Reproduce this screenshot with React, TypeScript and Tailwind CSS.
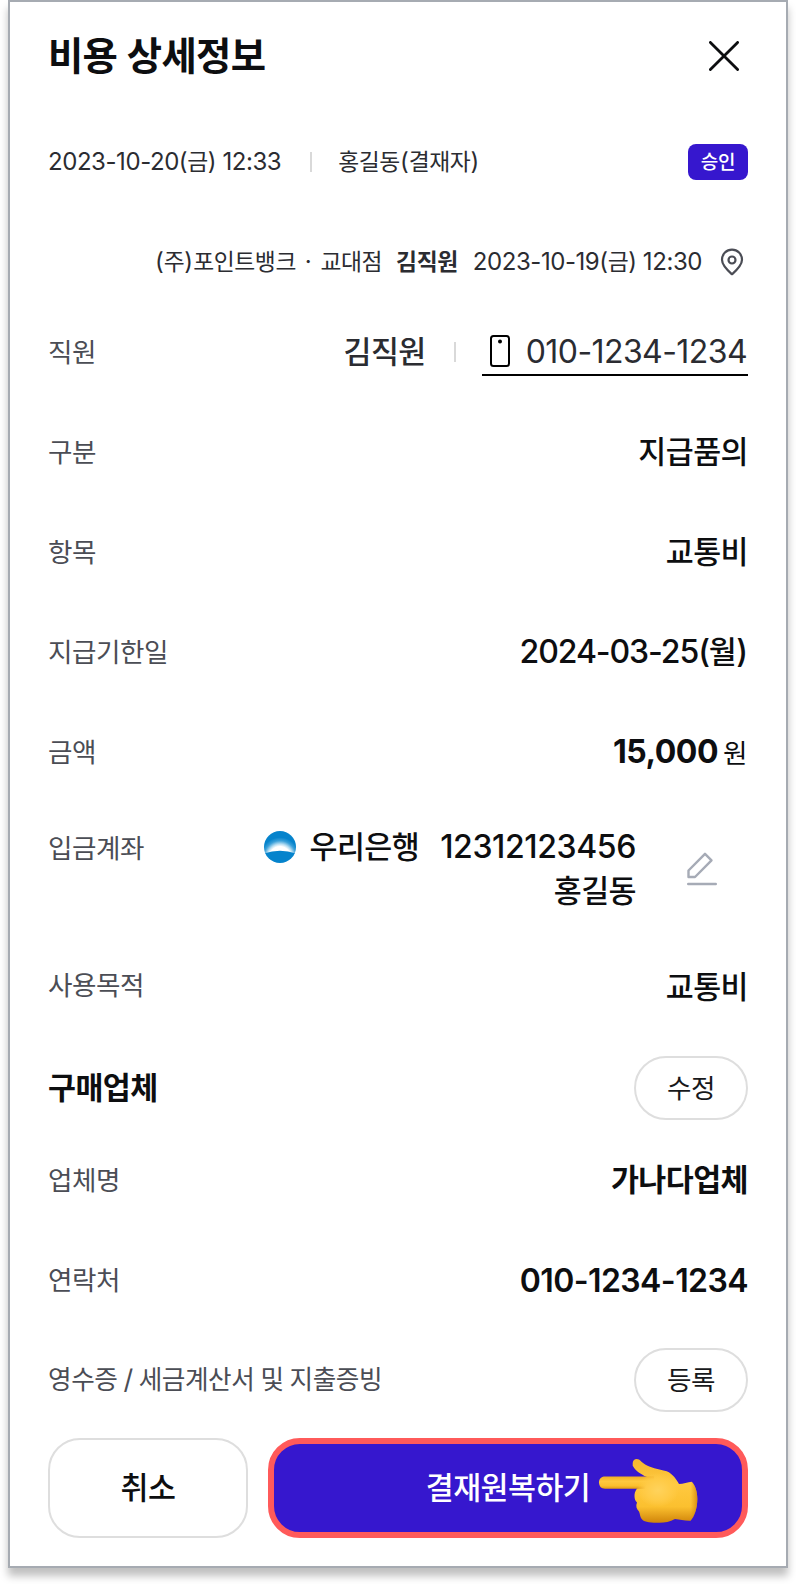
import React from 'react';

const HANGUL = /([\uac00-\ud7a3]+)/;

// Hangul is drawn slightly smaller than the latin digits around it
function Txt({ children, className = '' }: { children: string; className?: string }) {
  return (
    <span className={`whitespace-pre ${className}`}>
      {children.split(HANGUL).map((part, i) =>
        HANGUL.test(part) ? (
          <span key={i} className="text-[0.95em] tracking-[-0.018em]">
            {part}
          </span>
        ) : (
          part
        )
      )}
    </span>
  );
}

function Row({ label, className = 'h-[100px]', children }: { label: string; className?: string; children: React.ReactNode }) {
  return (
    <div className={`flex items-center justify-between ${className}`}>
      <Txt className="text-[28px] text-[#4b4d55]">{label}</Txt>
      {children}
    </div>
  );
}

function Value({ children, className = '' }: { children: string; className?: string }) {
  return <Txt className={`text-[32px] font-medium text-[#0d0e10] ${className}`}>{children}</Txt>;
}

function PillButton({ children }: { children: string }) {
  return (
    <button className="flex h-16 w-[114px] items-center justify-center rounded-full border-2 border-[#dedede] text-[28px] text-[#17181b]">
      <Txt>{children}</Txt>
    </button>
  );
}

function Divider({ className = '' }: { className?: string }) {
  return <span className={`h-5 w-0.5 bg-[#d9d9d9] ${className}`} />;
}

function BankLogo() {
  return (
    <svg className="h-8 w-8" viewBox="0 0 32 32">
      <defs>
        <radialGradient id="sky" gradientUnits="userSpaceOnUse" cx="16" cy="27" r="24" gradientTransform="translate(16 0) scale(.95 1) translate(-16 0)">
          <stop offset="0.48" stopColor="#ffffff" />
          <stop offset="0.58" stopColor="#b8def2" />
          <stop offset="0.72" stopColor="#3aa0d9" />
          <stop offset="0.86" stopColor="#0583cc" />
        </radialGradient>
        <clipPath id="disc">
          <circle cx="16" cy="16" r="16" />
        </clipPath>
      </defs>
      <g clipPath="url(#disc)">
        <rect width="32" height="32" fill="url(#sky)" />
        <path d="M0 22.500Q16 17 32 22.500V32H0z" fill="#0583cc" />
      </g>
    </svg>
  );
}

function PointingHand() {
  return (
    <svg className="h-[67px] w-[100px]" viewBox="0 0 100 67">
      <defs>
        <linearGradient id="skin" x1="0" y1="0" x2="0" y2="1">
          <stop offset="0" stopColor="#f5b82e" />
          <stop offset="0.4" stopColor="#ffc940" />
          <stop offset="0.75" stopColor="#fbc02f" />
          <stop offset="1" stopColor="#d0840a" />
        </linearGradient>
        <linearGradient id="finger" x1="0" y1="0" x2="0" y2="1">
          <stop offset="0" stopColor="#f0ae24" />
          <stop offset="0.4" stopColor="#ffc93f" />
          <stop offset="0.75" stopColor="#fbc02f" />
          <stop offset="1" stopColor="#e29a14" />
        </linearGradient>
        <linearGradient id="cuff" x1="0" y1="0" x2="1" y2="0">
          <stop offset="0.7" stopColor="#d88b0a" stopOpacity="0" />
          <stop offset="1" stopColor="#c97d08" stopOpacity="0.75" />
        </linearGradient>
        <radialGradient id="palm">
          <stop offset="0" stopColor="#ffd35c" />
          <stop offset="0.6" stopColor="#ffcb47" />
          <stop offset="1" stopColor="#ffcb47" stopOpacity="0" />
        </radialGradient>
      </defs>
      <path
        d="M34.700 6C35 2.500 38 1 41 2.500C43.500 4.500 45 7 52 9.700C58 12 63 12.500 68.700 14.300C75 17 78 22 81 27C85 27 90 25 93.700 24.700C97 28 99.300 34 99.300 42C99.300 52 96 60 92.700 63.700C87 64 82 62.500 77 62C71 65.500 65 66 58.700 65.700C51 65.700 45 65 43 61C42 59 42 57 41 54.500C38.500 52 37.500 49 39 45.500C36 43 35.500 36 38.700 32L49 20C42 17 37 13 34.700 8.700Z"
        fill="url(#skin)"
      />
      <path d="M7 19.500H56V31.800H7C3 31.800 1 29 1 25.300C1 22 3 19.500 7 19.500Z" fill="url(#finger)" />
      <ellipse cx="60" cy="33" rx="21" ry="17" fill="url(#palm)" />
      <path d="M81 27C85 27 90 25 93.700 24.700C97 28 99.300 34 99.300 42C99.300 52 96 60 92.700 63.700C87 64 82 62.500 77 62Z" fill="url(#cuff)" />
    </svg>
  );
}

export default function App() {
  return (
    <div className="h-[1584px] w-[796px] overflow-hidden bg-white pl-2 font-[Inter,'Noto_Sans_CJK_KR',sans-serif]">
      <div className="flex h-[1568px] w-[780px] flex-col border-2 border-[#a6abb2] bg-white px-[38px] shadow-[0_8px_8px_rgba(0,0,0,0.25)]">
        {/* Header */}
        <header className="flex h-[108px] items-center justify-between pr-[9px]">
          <Txt className="text-[40.4px] font-bold text-[#0d0e10]">비용 상세정보</Txt>
          <svg className="h-[30px] w-[30px]" viewBox="0 0 30 30" fill="none" stroke="#0d0e10" strokeWidth="2.8" strokeLinecap="round">
            <path d="M1.400 1.400L28.600 28.600M28.600 1.400L1.400 28.600" />
          </svg>
        </header>

        {/* Approval */}
        <div className="flex h-[104px] items-center text-2xl text-[#2b2c31]">
          <Txt className="tracking-[-0.018em]">2023-10-20(금) 12:33</Txt>
          <Divider className="mr-[26px] ml-[29px]" />
          <Txt>홍길동(결재자)</Txt>
          <span className="ml-auto flex h-9 w-[60px] items-center justify-center rounded-lg bg-[#3617ce] text-xl font-medium text-white">
            <Txt>승인</Txt>
          </span>
        </div>

        {/* Requester */}
        <div className="flex h-24 items-center justify-end pr-1 text-2xl text-[#2b2c31]">
          <Txt className="[word-spacing:2px]">(주)포인트뱅크 · 교대점</Txt>
          <Txt className="ml-3.5 font-bold">김직원</Txt>
          <Txt className="ml-[15px] tracking-[-0.018em]">2023-10-19(금) 12:30</Txt>
          <svg className="ml-[18px] h-7 w-6" viewBox="0 0 24 28" fill="none" stroke="#4b4d55" strokeWidth="2.200">
            <path d="M12 26.300C15.500 23.200 22 17.600 22 11.800A10 10.200 0 0 0 2 11.800C2 17.600 8.500 23.200 12 26.300Z" strokeLinejoin="round" />
            <circle cx="12" cy="12" r="3.500" />
          </svg>
        </div>

        <Row label="직원" className="mb-2 h-[84px]">
          <div className="flex items-center text-[32px] text-[#2b2c31]">
            <Txt className="font-medium">김직원</Txt>
            <Divider className="mr-[26px] ml-[28px]" />
            <a className="flex h-12 items-center border-b-2 border-black pl-2">
              <svg className="h-8 w-5" viewBox="0 0 20 32" fill="none" stroke="#000" strokeWidth="2">
                <rect x="1" y="1" width="18" height="30" rx="2.500" />
                <circle cx="10" cy="6.500" r="1" fill="#000" />
              </svg>
              <Txt className="ml-4 pt-0.5 pr-px tracking-[-0.018em]">010-1234-1234</Txt>
            </a>
          </div>
        </Row>
        <Row label="구분">
          <Value>지급품의</Value>
        </Row>
        <Row label="항목">
          <Value>교통비</Value>
        </Row>
        <Row label="지급기한일">
          <Value className="pr-px tracking-[-0.034em]">2024-03-25(월)</Value>
        </Row>
        <Row label="금액">
          <div className="flex items-baseline pr-px text-[#0d0e10]">
            <Txt className="text-[32px] font-bold tracking-[-0.016em]">15,000</Txt>
            <Txt className="ml-[5px] text-[28px]">원</Txt>
          </div>
        </Row>

        {/* Deposit account */}
        <div className="flex h-[134px] justify-between pt-[23px]">
          <Txt className="text-[28px] leading-[46px] text-[#4b4d55]">입금계좌</Txt>
          <div className="flex items-center self-start pr-[31px]">
            <div className="flex flex-col items-end text-[32px] leading-[44px] font-medium text-[#0d0e10]">
              <div className="flex items-center">
                <BankLogo />
                <Txt className="ml-3.5">우리은행</Txt>
                <Txt className="ml-[21px] tracking-[-0.012em]">12312123456</Txt>
              </div>
              <Txt>홍길동</Txt>
            </div>
            <svg className="ml-[51px] h-[34px] w-[30px]" viewBox="0 0 30 34" fill="none" stroke="#a6abb6" strokeWidth="2.400">
              <path d="M1.500 25V18.500L18 1.800L24.500 8.300L8 25Z" strokeLinejoin="round" />
              <path d="M1.200 32H28.800" strokeLinecap="round" />
            </svg>
          </div>
        </div>

        <div className="flex h-[100px] items-center justify-between">
          <Txt className="mb-[3px] text-[28px] text-[#4b4d55]">사용목적</Txt>
          <Value className="mt-0.5">교통비</Value>
        </div>

        {/* Vendor */}
        <div className="flex h-[104px] items-center justify-between">
          <Txt className="text-[32px] font-bold text-[#0d0e10]">구매업체</Txt>
          <PillButton>수정</PillButton>
        </div>
        <Row label="업체명" className="h-20">
          <Txt className="text-[32px] font-bold text-[#0d0e10]">가나다업체</Txt>
        </Row>
        <Row label="연락처" className="h-[120px]">
          <Txt className="pt-0.5 text-[32px] font-semibold tracking-[-0.018em] text-[#0d0e10]">010-1234-1234</Txt>
        </Row>
        <div className="flex h-20 items-center justify-between">
          <Txt className="text-[27px] tracking-[-0.02em] text-[#4b4d55] [word-spacing:-1px]">영수증 / 세금계산서 및 지출증빙</Txt>
          <PillButton>등록</PillButton>
        </div>

        {/* Actions */}
        <div className="mt-[18px] flex gap-5 text-[32px] font-medium">
          <button className="flex h-[100px] w-[200px] items-center justify-center rounded-[32px] border-2 border-[#dedede] text-[#0d0e10]">
            <Txt>취소</Txt>
          </button>
          <button className="relative flex h-[100px] flex-1 items-center justify-center rounded-[32px] border-[6px] border-[#ff5a5a] bg-[#3617ce] text-white">
            <Txt>결재원복하기</Txt>
            <span className="absolute top-[13px] left-[324px]">
              <PointingHand />
            </span>
          </button>
        </div>
      </div>
    </div>
  );
}
